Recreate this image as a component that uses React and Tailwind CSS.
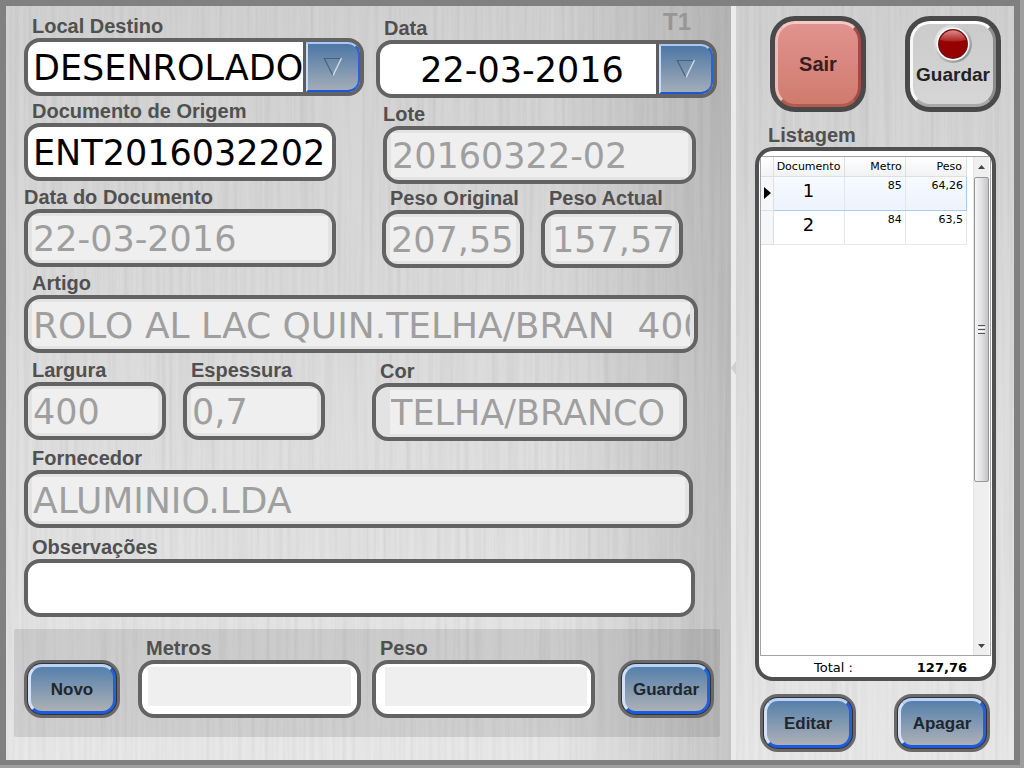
import React, { useState } from 'react';

const ROWS = [
  { doc: 1, metro: '85', peso: '64,26' },
  { doc: 2, metro: '84', peso: '63,5' },
];

const LABEL = "block text-[20px] leading-6 font-bold text-[#505050] whitespace-nowrap";
const FRAME = "flex h-[58px] overflow-hidden rounded-[16px] border-4 border-[#636363]";
const VALUE = "min-w-0 w-full h-full pt-0.5 font-['DejaVu_Sans','Verdana',sans-serif] outline-none";

// Brushed metal grain behind a panel
const Brushed = ({ id }) => (
  <svg className="absolute inset-0 w-full h-full opacity-[0.09] pointer-events-none" aria-hidden="true">
    <filter id={id} x="0" y="0" width="100%" height="100%">
      <feTurbulence type="fractalNoise" baseFrequency="0.22 0.004" numOctaves="3" seed="4" />
      <feColorMatrix values="1.6 0 0 0 -0.05  1.6 0 0 0 -0.05  1.6 0 0 0 -0.05  0 0 0 0 1" />
    </filter>
    <rect width="100%" height="100%" filter={`url(#${id})`} />
  </svg>
);

const Field = ({ id, label, value, disabled, flush, pad = 'pl-1', size = 'text-[35px]', className = '' }) => {
  const [text, setText] = useState(value || '');
  return (
    <div className={`min-w-0 ${className}`}>
      <label htmlFor={id} className={`${LABEL} ${flush ? '' : 'pl-2'}`}>{label}</label>
      <div className={`${FRAME} ${disabled ? `bg-[#e3e3e3] py-[3px] pr-1 ${pad}` : 'bg-white px-1'}`}>
        <input
          id={id}
          type="text"
          value={text}
          disabled={disabled}
          onChange={(e) => setText(e.target.value)}
          className={`${VALUE} ${size} pl-px ${disabled ? 'bg-[#efefef] text-[#9f9f9f]' : 'bg-transparent text-black'}`}
        />
      </div>
    </div>
  );
};

const ComboField = ({ id, label, value, tag, center, className = '' }) => {
  const [text, setText] = useState(value);
  return (
    <div className={`min-w-0 ${className}`}>
      <div className="flex justify-between items-start pl-2 pr-[26px]">
        <label htmlFor={id} className={LABEL}>{label}</label>
        {tag && <span className="text-[24px] leading-3 font-bold text-[#969696]">{tag}</span>}
      </div>
      <div className={`${FRAME} bg-white`}>
        <input
          id={id}
          type="text"
          value={text}
          onChange={(e) => setText(e.target.value)}
          className={`${VALUE} text-[35px] text-black ${center ? 'text-center pl-2' : 'pl-[5px]'}`}
        />
        <button
          type="button"
          aria-label={`Escolher ${label}`}
          className="shrink-0 w-[57px] border-l-[3px] border-[#5d5d5d] bg-[#5d5d5d]"
        >
          <span className="flex h-full items-center justify-center rounded-r-[12px] border-2 border-t-[#a9c8f7] border-l-[#c6dcff] border-r-[#2a62dc] border-b-[#1d57d8] bg-linear-to-b from-[#4d77a4] to-[#a3adb8]">
            <svg width="20" height="20" viewBox="0 0 20 20" fill="none" aria-hidden="true">
              <path d="M1 1.5H18.500" stroke="#4d5f76" strokeWidth="1.200" />
              <path d="M1 1L10 18.500" stroke="#4d5f76" strokeWidth="1.200" />
              <path d="M18.500 1L10 18.500" stroke="#d4dde8" strokeWidth="1.400" />
            </svg>
          </span>
        </button>
      </div>
    </div>
  );
};

const BlueButton = ({ children }) => (
  <button type="button" className="shrink-0 w-24 h-[58px] rounded-[18px] border-[3px] border-[#696969] bg-[#333333] p-px">
    <span className="flex h-full items-center justify-center rounded-[14px] border-[3px] border-t-[#bcd3f6] border-l-[#d3e1fb] border-r-[#2460dc] border-b-[#1c5be0] bg-linear-to-b from-[#5580ab] to-[#adb0b5] pt-px text-[17px] font-bold text-[#20262d]">
      {children}
    </span>
  </button>
);

const Listing = () => {
  const [selected, setSelected] = useState(1);
  return (
    <div className="flex flex-1 flex-col overflow-hidden rounded-[18px] border-4 border-[#505050] bg-white pt-[5px] px-px font-['DejaVu_Sans','Verdana',sans-serif] text-black">
      <div className="flex flex-1 min-h-[499px] border border-[#a2a2a8] pr-px">
        <div className="flex-1 pr-[6px]">
          <table className="w-full table-fixed border-collapse text-[11px]">
            <colgroup>
              <col className="w-[12px]" />
              <col className="w-[71px]" />
              <col />
              <col />
            </colgroup>
            <thead>
              <tr className="h-[19px] bg-linear-to-b from-white to-[#f1f2f4]">
                <th className="border-r border-b border-[#dddfe3]" aria-label="Linha" />
                <th className="border-r border-b border-[#dddfe3] pt-0.5 font-normal">Documento</th>
                <th className="border-r border-b border-[#dddfe3] pt-0.5 pr-[3px] text-right font-normal">Metro</th>
                <th className="border-r border-b border-[#dddfe3] pt-0.5 pr-1 text-right font-normal">Peso</th>
              </tr>
            </thead>
            <tbody>
              {ROWS.map((row) => {
                const active = row.doc === selected;
                const cell = active
                  ? 'border-y border-y-[#a9c9f5] bg-linear-to-b from-[#f8fbff] to-[#ebf3fd]'
                  : 'border-b border-b-[#e9e9e9]';
                return (
                  <tr key={row.doc} onClick={() => setSelected(row.doc)} className="h-[34px]">
                    <td className="border-r border-b border-[#dddfe3] bg-[#f6f7f9]">
                      {active && (
                        <svg width="7" height="12" viewBox="0 0 7 12" className="ml-[3px]" aria-hidden="true">
                          <path d="M0 0L7 6L0 12Z" fill="#000" />
                        </svg>
                      )}
                    </td>
                    <td className={`${cell} border-r border-r-[#e3e6ea] pb-1 text-center text-[18px] leading-6`}>{row.doc}</td>
                    <td className={`${cell} border-r border-r-[#e3e6ea] pr-[3px] pt-px text-right align-top`}>{row.metro}</td>
                    <td className={`${cell} border-r ${active ? 'border-r-[#a9c9f5]' : 'border-r-[#e3e6ea]'} pr-[3px] pt-px text-right align-top`}>{row.peso}</td>
                  </tr>
                );
              })}
            </tbody>
          </table>
        </div>

        {/* Scroll bar */}
        <div className="flex w-4 flex-col bg-[#efefef] border-l border-[#e4e4e4]">
          <button type="button" aria-label="Subir" className="flex h-5 items-center justify-center">
            <svg width="7" height="4" viewBox="0 0 7 4" aria-hidden="true"><path d="M3.500 0L7 4H0Z" fill="#444" /></svg>
          </button>
          <div className="flex h-[305px] items-center justify-center rounded-[2px] border border-[#979797] bg-linear-to-r from-[#f4f4f4] via-[#e2e2e4] to-[#c4c4c8]">
            <div className="flex flex-col gap-px">
              <i className="block h-px w-[7px] bg-[#555]" />
              <i className="block h-px w-[7px] bg-white" />
              <i className="block h-px w-[7px] bg-[#555]" />
              <i className="block h-px w-[7px] bg-white" />
              <i className="block h-px w-[7px] bg-[#555]" />
            </div>
          </div>
          <button type="button" aria-label="Descer" className="mt-auto flex h-[18px] items-center justify-center">
            <svg width="7" height="4" viewBox="0 0 7 4" aria-hidden="true"><path d="M0 0H7L3.500 4Z" fill="#444" /></svg>
          </button>
        </div>
      </div>
      <div className="flex h-[21px] items-center justify-between pt-0.5 pl-[54px] pr-[24px] text-[13px]">
        <span>Total :</span>
        <span className="font-bold">127,76</span>
      </div>
    </div>
  );
};

const App = () => {
  return (
    <div className="flex min-h-screen bg-[#9f9f9f] pr-1 pb-[3px] font-['Liberation_Sans','Arial',sans-serif]">
      <div className="flex flex-1 border-x-[6px] border-t-[6px] border-b-[5px] border-[#808080]">

        {/* Form */}
        <main className="relative isolate flex min-w-0 flex-1 flex-col bg-linear-to-b from-[#cdcdcd] to-[#e6e6e6] pt-2 pb-[23px]">
          <div className="absolute inset-0 -z-10 bg-linear-to-r from-transparent from-75% to-black/15" />
          <div className="absolute inset-0 -z-10"><Brushed id="grain-form" /></div>

          <div className="flex flex-col pl-[18px] pr-[14px]">
            <div className="grid grid-cols-[340fr_341fr] gap-x-3">
              <ComboField id="destino" label="Local Destino" value="DESENROLADOR" />
              <ComboField id="data" label="Data" value="22-03-2016" tag="T1" center className="mt-0.5" />
            </div>

            <div className="mt-px grid grid-cols-[312fr_313fr] gap-x-[47px] pr-[21px]">
              <Field id="origem" label="Documento de Origem" value="ENT2016032202" />
              <Field id="lote" label="Lote" value="20160322-02" disabled flush className="mt-[3px]" />
            </div>

            <div className="mt-px grid grid-cols-[312fr_171fr_142fr] gap-x-[17px] pr-[34px]">
              <Field id="data-doc" label="Data do Documento" value="22-03-2016" disabled flush />
              <Field id="peso-original" label="Peso Original" value="207,55" disabled className="mt-px ml-[29px]" />
              <Field id="peso-actual" label="Peso Actual" value="157,57" disabled pad="pl-[6px]" className="mt-px" />
            </div>

            <Field id="artigo" label="Artigo" value="ROLO AL LAC QUIN.TELHA/BRAN  400" disabled size="text-[36px]" className="mt-[3px] mr-[19px]" />

            <div className="mt-[5px] grid grid-cols-[142fr_142fr_345fr] gap-x-[17px] pr-[30px]">
              <Field id="largura" label="Largura" value="400" disabled />
              <Field id="espessura" label="Espessura" value="0,7" disabled />
              <Field id="cor" label="Cor" value="TELHA/BRANCO" disabled pad="pl-[14px]" className="mt-px ml-[30px]" />
            </div>

            <Field id="fornecedor" label="Fornecedor" value="ALUMINIO.LDA" disabled size="text-[36px]" className="mt-[5px] mr-6" />
            <Field id="observacoes" label="Observações" className="mt-[7px] mr-[22px]" />
          </div>

          <section className="mt-3 ml-2 mr-[11px] flex items-end rounded-[2px] bg-black/10 pt-[7px] pr-[6px] pb-[19px] pl-[10px]">
            <BlueButton>Novo</BlueButton>
            <div className="ml-[18px] min-w-0 flex-1">
              <label htmlFor="metros" className={`${LABEL} pl-2`}>Metros</label>
              <div className={`${FRAME} bg-white px-[6px] pt-[3px] pb-2`}>
                <input id="metros" type="text" className={`${VALUE} text-[35px] bg-[#efefef]`} />
              </div>
            </div>
            <div className="ml-[11px] min-w-0 flex-1">
              <label htmlFor="peso" className={`${LABEL} pl-2`}>Peso</label>
              <div className={`${FRAME} bg-white pl-[9px] pr-1 pt-[3px] pb-2`}>
                <input id="peso" type="text" className={`${VALUE} text-[35px] bg-[#efefef]`} />
              </div>
            </div>
            <div className="ml-[23px] flex"><BlueButton>Guardar</BlueButton></div>
          </section>
        </main>

        {/* Splitter */}
        <div className="flex w-[5px] items-center justify-end bg-[#ebebeb] pb-[30px]">
          <svg width="5" height="14" viewBox="0 0 5 14" aria-hidden="true"><path d="M5 0V14L0 7Z" fill="#cfcfcf" /></svg>
        </div>

        {/* List */}
        <aside className="relative isolate flex w-[278px] shrink-0 flex-col bg-linear-to-b from-[#cdcdcd] to-[#e6e6e6] pt-[10px] pb-2">
          <div className="absolute inset-0 -z-10"><Brushed id="grain-list" /></div>

          <div className="flex justify-between pl-[34px] pr-[13px]">
            <button type="button" className="h-24 w-24 rounded-[25px] border-[5px] border-[#494949] bg-[#444]">
              <span className="flex h-full items-center justify-center rounded-[20px] border-[3px] border-t-[#f3c9c6] border-l-[#efbdb9] border-r-[#a54a43] border-b-[#b25c51] bg-linear-to-b from-[#e2928f] to-[#cf7b6d] text-[20px] font-bold text-[#33201f]">
                Sair
              </span>
            </button>
            <button type="button" className="h-24 w-24 rounded-[25px] border-[5px] border-[#494949] bg-[#444]">
              <span className="flex h-full flex-col items-center rounded-[20px] border-[3px] border-t-white border-l-[#f8f8f8] border-r-[#8d8d8d] border-b-[#a9a9a9] bg-linear-to-b from-[#cbcbcb] to-[#d6d6d6] pt-px text-[19px] leading-6 font-bold text-[#222]">
                <svg width="38" height="38" viewBox="0 0 38 38" aria-hidden="true">
                  <defs>
                    <linearGradient id="led-ring" x1="0" y1="0" x2="1" y2="1">
                      <stop offset="0" stopColor="#fafafa" />
                      <stop offset="1" stopColor="#858585" />
                    </linearGradient>
                    <linearGradient id="led-shine" x1="0" y1="0" x2="0" y2="1">
                      <stop offset="0" stopColor="#e08a8a" />
                      <stop offset="1" stopColor="#a82020" />
                    </linearGradient>
                  </defs>
                  <circle cx="19" cy="19" r="19" fill="url(#led-ring)" />
                  <circle cx="19" cy="19" r="16.500" fill="#fff" />
                  <circle cx="19" cy="19" r="15" fill="#5a1a1a" />
                  <circle cx="19" cy="19" r="14" fill="#950000" />
                  <path d="M6 15A13.500 13.500 0 0 1 32 15Q19 18 6 15Z" fill="url(#led-shine)" />
                </svg>
                Guardar
              </span>
            </button>
          </div>

          <h2 className={`${LABEL} mt-[11px] pl-8`}>Listagem</h2>

          <div className="flex flex-1 flex-col pl-[19px] pr-[18px]">
            <Listing />
          </div>

          <div className="mt-[13px] flex justify-between px-6">
            <BlueButton>Editar</BlueButton>
            <BlueButton>Apagar</BlueButton>
          </div>
        </aside>
      </div>
    </div>
  );
};

export default App;
